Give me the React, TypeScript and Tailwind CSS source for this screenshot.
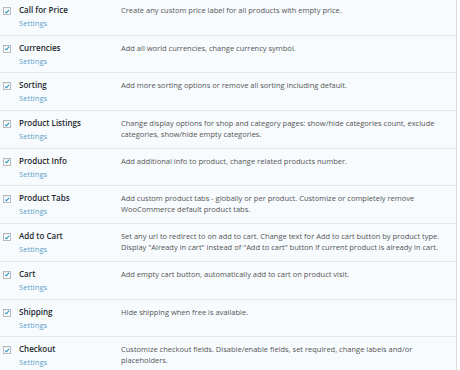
const modules = [
  { name: 'Call for Price', desc: 'Create any custom price label for all products with empty price.' },
  { name: 'Currencies', desc: 'Add all world currencies, change currency symbol.' },
  { name: 'Sorting', desc: 'Add more sorting options or remove all sorting including default.' },
  {
    name: 'Product Listings',
    desc: 'Change display options for shop and category pages: show/hide categories count, exclude categories, show/hide empty categories.',
  },
  { name: 'Product Info', desc: 'Add additional info to product, change related products number.' },
  {
    name: 'Product Tabs',
    desc: 'Add custom product tabs - globally or per product. Customize or completely remove WooCommerce default product tabs.',
  },
  {
    name: 'Add to Cart',
    desc: 'Set any url to redirect to on add to cart. Change text for Add to cart button by product type. Display "Already in cart" instead of "Add to cart" button if current product is already in cart.',
  },
  { name: 'Cart', desc: 'Add empty cart button, automatically add to cart on product visit.' },
  { name: 'Shipping', desc: 'Hide shipping when free is available.' },
  {
    name: 'Checkout',
    desc: 'Customize checkout fields. Disable/enable fields, set required, change labels and/or placeholders.',
  },
];

function Check() {
  return (
    <span className="mt-[9px] flex h-[8px] w-[8px] shrink-0 items-center justify-center border border-[#b4b9be] bg-white shadow-[inset_0_1px_1px_rgba(0,0,0,0.08)]">
      <svg viewBox="0 0 10 10" className="h-[7px] w-[7px]">
        <path d="M1.8 5.2 L4 7.3 L8.3 2.4" fill="none" stroke="#1e8cbe" strokeWidth="1.7" />
      </svg>
    </span>
  );
}

export default function App() {
  return (
    <div
      className="h-[370px] w-[460px] overflow-hidden bg-white"
      style={{ fontFamily: '"Open Sans", "Noto Sans", sans-serif' }}
    >
      <div className="-mt-[2px] w-[457px] border-r border-[#d9dde0] bg-[#f7fbfe]">
        {modules.map((m) => (
          <div key={m.name} className="flex h-[37.7px] border-b border-[#e3e8ec]">
            <div className="flex w-[121px] shrink-0 pl-[3px]">
              <Check />
              <div className="ml-[8px] pt-[6px]">
                <div className="text-[8px] font-semibold leading-[12px] text-[#23282d]">{m.name}</div>
                <div className="mt-[1px] text-[7.6px] leading-[12px] text-[#5f9fc9]">Settings</div>
              </div>
            </div>
            <p className="w-[320px] pt-[7px] text-[7.5px] leading-[11px] text-[#555]">{m.desc}</p>
          </div>
        ))}
      </div>
    </div>
  );
}
